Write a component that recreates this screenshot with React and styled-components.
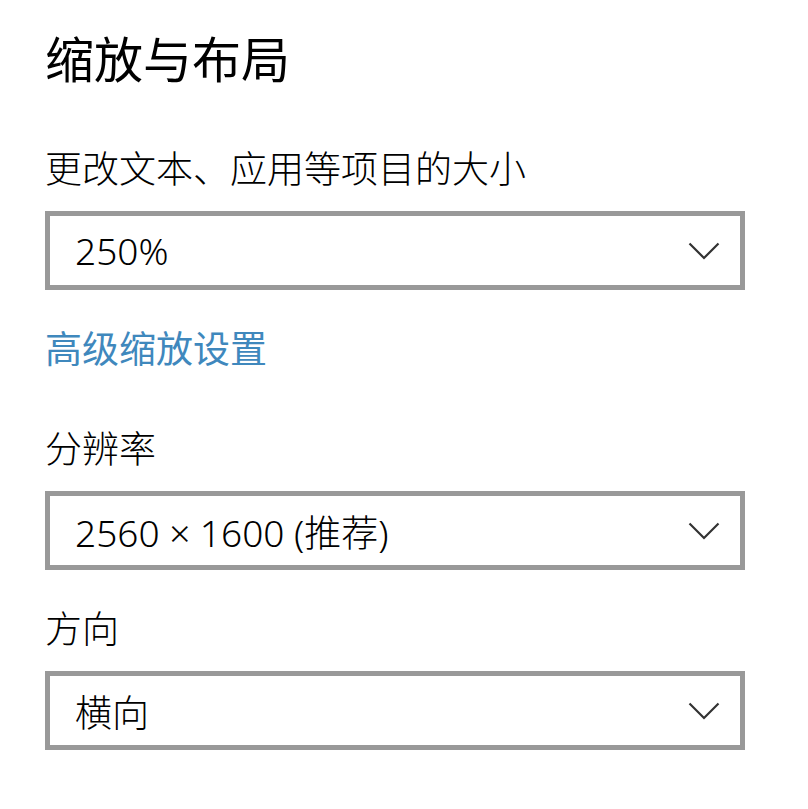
import React from 'react'
import styled, { createGlobalStyle } from 'styled-components'

const GlobalStyle = createGlobalStyle`
  html, body {
    margin: 0;
    padding: 0;
    background: #fff;
  }
  body {
    font-family: "Noto Sans", "Noto Sans CJK SC", sans-serif;
    color: #000;
  }
`

const Page = styled.div`
  padding: 29px 0 0 45px;
  width: 700px;
`

const Title = styled.h1`
  margin: 0;
  font-size: 49px;
  font-weight: 400;
  line-height: 60px;
`

const Label = styled.div`
  font-size: 37px;
  font-weight: 300;
  line-height: 50px;
  margin-top: ${(p) => p.$top}px;
`

const Select = styled.div`
  box-sizing: border-box;
  height: 79px;
  margin-top: 17px;
  border: 5px solid #999;
  display: flex;
  align-items: center;
  justify-content: space-between;
  padding: 0 20px 0 25px;
  font-size: 37px;
  font-weight: 300;
`

const Link = styled.a`
  display: block;
  margin-top: 34px;
  font-size: 37px;
  line-height: 50px;
  color: #3f88bd;
  text-decoration: none;
`

const Chevron = () => (
  <svg width="32" height="18" viewBox="0 0 32 18">
    <path d="M1.5 1.5 L16 16 L30.5 1.5" fill="none" stroke="#333" strokeWidth="2.2" />
  </svg>
)

const Dropdown = ({ value }) => (
  <Select>
    <span>{value}</span>
    <Chevron />
  </Select>
)

export default function App() {
  return (
    <>
      <GlobalStyle />
      <Page>
        <Title>缩放与布局</Title>
        <Label $top={55}>更改文本、应用等项目的大小</Label>
        <Dropdown value="250%" />
        <Link href="#">高级缩放设置</Link>
        <Label $top={50}>分辨率</Label>
        <Dropdown value="2560 × 1600 (推荐)" />
        <Label $top={34}>方向</Label>
        <Dropdown value="横向" />
      </Page>
    </>
  )
}
